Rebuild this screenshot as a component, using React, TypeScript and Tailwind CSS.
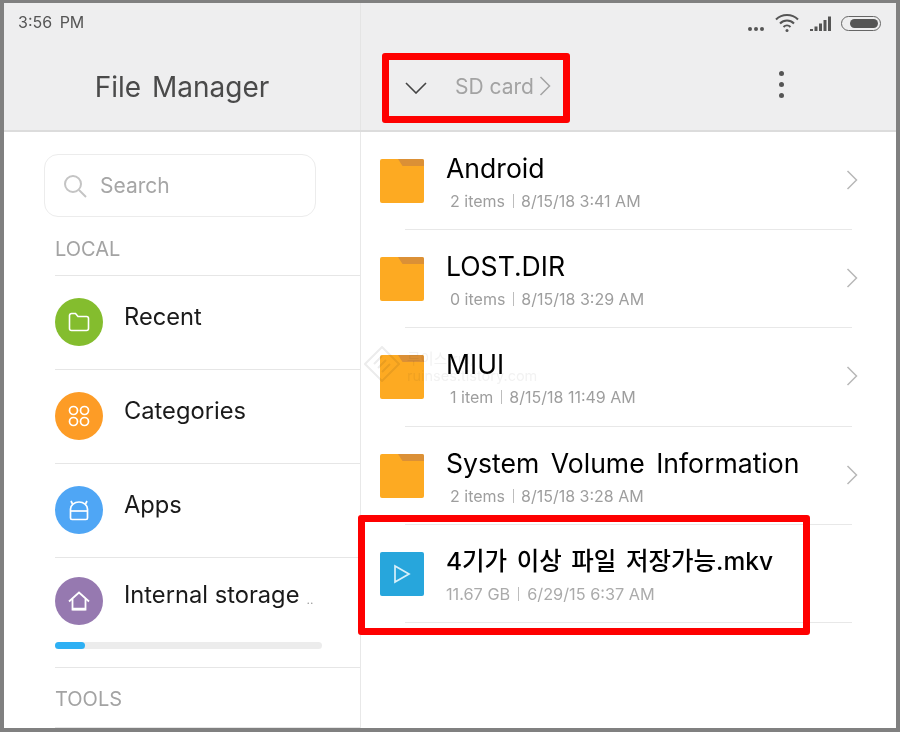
const sideItems = [
  { label: 'Recent', color: 'bg-[#84bd2e]', icon: 'folder' },
  { label: 'Categories', color: 'bg-[#fd9c26]', icon: 'grid' },
  { label: 'Apps', color: 'bg-[#4fa6f5]', icon: 'android' },
];

const files = [
  { name: 'Android', count: '2 items', date: '8/15/18 3:41 AM' },
  { name: 'LOST.DIR', count: '0 items', date: '8/15/18 3:29 AM' },
  { name: 'MIUI', count: '1 item', date: '8/15/18 11:49 AM' },
  { name: 'System Volume Information', count: '2 items', date: '8/15/18 3:28 AM' },
];

function SideIcon({ icon }: { icon: string }) {
  if (icon === 'folder') {
    return (
      <svg width="22" height="20" viewBox="0 0 22 20" fill="none" stroke="white" strokeWidth="1.6">
        <path d="M1.5 3.5a2 2 0 0 1 2-2h4l2.5 3h8.500a2 2 0 0 1 2 2v10a2 2 0 0 1-2 2h-15a2 2 0 0 1-2-2z" />
      </svg>
    );
  }
  if (icon === 'grid') {
    return (
      <svg width="22" height="22" viewBox="0 0 22 22" fill="none" stroke="white" strokeWidth="1.7">
        <circle cx="5.500" cy="5.500" r="4" />
        <circle cx="16.500" cy="5.500" r="4" />
        <circle cx="5.500" cy="16.500" r="4" />
        <circle cx="16.500" cy="16.500" r="4" />
      </svg>
    );
  }
  if (icon === 'android') {
    return (
      <svg width="22" height="22" viewBox="0 0 22 22" fill="none" stroke="white" strokeWidth="1.7">
        <path d="M2.500 19v-9a8.500 7 0 0 1 17 0v9a1.500 1.500 0 0 1-1.500 1.500h-14a1.500 1.500 0 0 1-1.500-1.500z" />
        <path d="M2.500 12h17" />
        <path d="M4.500 5l-1.500-3M17.500 5l1.500-3" />
      </svg>
    );
  }
  return (
    <svg width="22" height="20" viewBox="0 0 22 20" fill="none" stroke="white" strokeWidth="1.800">
      <path d="M1 10.500l10-9 10 9" />
      <path d="M4.500 8v10.500h13v-10.500" />
      <path d="M4.500 18h13" strokeWidth="2.500" />
    </svg>
  );
}

function SideRow({ label, color, icon }: { label: string; color: string; icon: string }) {
  return (
    <div className="flex h-[94px] border-b border-[#e6e6e6] pt-[22px]">
      <div className={`flex h-12 w-12 items-center justify-center rounded-full ${color}`}>
        <SideIcon icon={icon} />
      </div>
      <span className="ml-[21px] mt-[1px] text-[23.7px] leading-[36px] text-[#1a1a1a]">{label}</span>
    </div>
  );
}

function Folder() {
  return (
    <svg width="44" height="44" viewBox="0 0 44 44" className="shrink-0">
      <rect width="44" height="44" rx="2" fill="#fdaa22" />
      <path d="M18 0h24a2 2 0 0 1 2 2v5h-21.500z" fill="#db9036" />
    </svg>
  );
}

function Chevron() {
  return (
    <svg width="12" height="20" viewBox="0 0 12 20" fill="none" stroke="#b8b8b8" strokeWidth="1.500">
      <path d="M1.500 1l9 9-9 9" />
    </svg>
  );
}

function FileRow({ name, count, date }: { name: string; count: string; date: string }) {
  return (
    <div className="flex h-[98.200px] pl-[19px] pr-[44px]">
      <div className="mt-[27px]">
        <Folder />
      </div>
      <div className="-ml-[19px] flex flex-1 border-b border-[#e8e8e8] pl-[41px]">
        <div className="flex-1">
          <div className="mt-[18px] text-[26.6px] leading-[36px] text-black [word-spacing:4px]">{name}</div>
          <div className="ml-[4px] mt-[3px] flex items-center text-[16px] leading-[24px] text-[#9e9e9e]">
            <span>{count}</span>
            <span className="mx-[7.500px] h-[14px] w-px bg-[#bdbdbd]" />
            <span>{date}</span>
          </div>
        </div>
        <div className="-mr-[6px] mt-[38px]">
          <Chevron />
        </div>
      </div>
    </div>
  );
}

export default function App() {
  return (
    <div
      className="relative h-[732px] w-[900px] overflow-hidden border-x-[4px] border-t-[3px] border-b-[4px] border-[#808080] bg-white"
      style={{ fontFamily: 'Inter, "Noto Sans CJK KR", sans-serif' }}
    >
      <div className="flex h-[129px] border-b-2 border-[#dcdcdc] bg-[#eeeeef]">
        <div className="w-[357px] shrink-0 border-r border-[#e4e4e4]">
          <div className="pl-[14px] pt-[8px] text-[16px] leading-[22px] text-[#555] [word-spacing:3px]">3:56 PM</div>
          <div className="mt-[34px] text-center text-[28px] leading-[40px] text-[#4a4a4a] [word-spacing:3px]">File Manager</div>
        </div>
        <div className="relative flex-1">
          <div className="flex h-[42px] items-start justify-end pr-[15px] pt-[10px]">
            <div className="mr-[11px] mt-[14px] flex gap-[2px]">
              <span className="h-[4px] w-[4px] rounded-full bg-[#555]" />
              <span className="h-[4px] w-[4px] rounded-full bg-[#555]" />
              <span className="h-[4px] w-[4px] rounded-full bg-[#555]" />
            </div>
            <svg width="24" height="20" viewBox="0 0 24 20" fill="none" stroke="#555" strokeWidth="2">
              <path d="M1 6.500c6-6 16-6 22 0" />
              <path d="M5 10.500c4-4 10-4 14 0" />
              <path d="M8.500 14c2-2 5-2 7 0" />
              <circle cx="12" cy="17.500" r="1.500" fill="#555" stroke="none" />
            </svg>
            <svg width="22" height="16" viewBox="0 0 22 16" className="ml-[11px] mt-[3px]" fill="#555">
              <rect x="0" y="13" width="3" height="2" />
              <rect x="4.500" y="10.500" width="3" height="4.500" />
              <rect x="9" y="7.500" width="3" height="7.500" />
              <rect x="13.500" y="4" width="3" height="11" />
              <rect x="18" y="0.500" width="3" height="14.500" />
            </svg>
            <div className="ml-[9px] mt-[3px] flex h-[15px] w-[40px] items-center rounded-full border-[1.500px] border-[#666] pl-[8px] pr-[2px]">
              <div className="h-[9px] flex-1 rounded-full bg-[#555]" />
            </div>
          </div>
          <div className="flex h-[85px] items-center pb-[2px]">
            <svg width="22" height="12" viewBox="0 0 22 12" fill="none" stroke="#444" strokeWidth="1.600" className="ml-[44px] mt-[2px]">
              <path d="M1 1l10 10 10-10" />
            </svg>
            <span className="ml-[28px] text-[21px] leading-[30px] text-[#a3a3a3]">SD card</span>
            <svg width="12" height="20" viewBox="0 0 12 20" fill="none" stroke="#a3a3a3" strokeWidth="1.500" className="ml-[5px] -mt-[2px]">
              <path d="M1.500 1l9 9-9 9" />
            </svg>
            <div className="ml-[228px] -mt-[5px] flex flex-col gap-[6px]">
              <span className="h-[5px] w-[5px] rounded-full bg-[#555]" />
              <span className="h-[5px] w-[5px] rounded-full bg-[#555]" />
              <span className="h-[5px] w-[5px] rounded-full bg-[#555]" />
            </div>
          </div>
        </div>
      </div>

      <div className="flex">
        <div className="w-[357px] shrink-0 border-r border-[#e8e8e8] pl-[51px]">
          <div className="-ml-[11px] mt-[22px] flex h-[63px] w-[272px] items-center rounded-[14px] border border-[#ececec] pl-[18px]">
            <svg width="24" height="24" viewBox="0 0 24 24" fill="none" stroke="#c4c4c4" strokeWidth="2">
              <circle cx="10" cy="10" r="8" />
              <path d="M16 16l7 7" />
            </svg>
            <span className="ml-[13px] text-[21px] leading-[30px] text-[#a6a6a6]">Search</span>
          </div>
          <div className="mt-[18px] h-[41px] border-b border-[#e6e6e6] text-[20px] leading-[28px] text-[#a3a3a3]">LOCAL</div>
          {sideItems.map((item) => (
            <SideRow key={item.label} {...item} />
          ))}
          <div className="h-[110px] border-b border-[#e6e6e6] pt-[19px]">
            <div className="flex">
              <div className="flex h-12 w-12 items-center justify-center rounded-full bg-[#9679b0]">
                <SideIcon icon="home" />
              </div>
              <span className="ml-[21px] text-[23.7px] leading-[36px] text-[#1a1a1a]">Internal storage</span>
              <span className="ml-[7px] mt-[8px] text-[12px] leading-[30px] text-[#999]">..</span>
            </div>
            <div className="mt-[17px] h-[7px] w-[267px] rounded-full bg-[#ececec]">
              <div className="h-full w-[30px] rounded-full bg-[#2db0f4]" />
            </div>
          </div>
          <div className="mt-[17px] h-[43px] border-b border-[#e6e6e6] text-[20px] leading-[28px] text-[#a3a3a3]">TOOLS</div>
        </div>

        <div className="flex-1">
          {files.map((f) => (
            <FileRow key={f.name} {...f} />
          ))}
          <div className="flex h-[98px] pl-[19px] pr-[44px]">
            <div className="mt-[27px] flex h-[44px] w-[44px] shrink-0 items-center justify-center rounded-[2px] bg-[#27a6dc]">
              <svg width="18" height="20" viewBox="0 0 18 20" fill="none" stroke="#d8f0fa" strokeWidth="1.700">
                <path d="M2 2l14 8-14 8z" />
              </svg>
            </div>
            <div className="-ml-[19px] flex-1 border-b border-[#e8e8e8] pl-[41px]">
              <div className="mt-[18px] text-[24.5px] font-medium leading-[36px] text-black [word-spacing:3px]">4기가 이상 파일 저장가능.mkv</div>
              <div className="mt-[3px] flex items-center text-[16.3px] leading-[24px] text-[#ababab]">
                <span>11.67 GB</span>
                <span className="mx-[8px] h-[14px] w-px bg-[#bdbdbd]" />
                <span>6/29/15 6:37 AM</span>
              </div>
            </div>
          </div>
        </div>
      </div>

      {/* watermark over the MIUI row */}
      <div className="pointer-events-none absolute left-[403px] top-[347px] text-[14.5px] leading-[17px] text-[#f2f2f2] mix-blend-multiply">
        <div>루이스(rui)</div>
        <div>ruinses.tistory.com</div>
      </div>
      <svg width="36" height="36" viewBox="0 0 36 36" className="pointer-events-none absolute left-[360px] top-[343px] mix-blend-multiply" fill="none" stroke="#ececec" strokeWidth="2">
        <path d="M18 1l17 17-17 17L1 18z" />
        <path d="M10 18l8-8M14 22l8-8M18 26l8-8" />
      </svg>

      {/* red annotations */}
      <div className="pointer-events-none absolute left-[378px] top-[50px] h-[70px] w-[188px] rounded-[3px] border-[7px] border-[#fe0000]" />
      <div className="pointer-events-none absolute left-[354px] top-[512px] h-[120px] w-[452px] rounded-[3px] border-[7px] border-[#fe0000]" />
    </div>
  );
}
